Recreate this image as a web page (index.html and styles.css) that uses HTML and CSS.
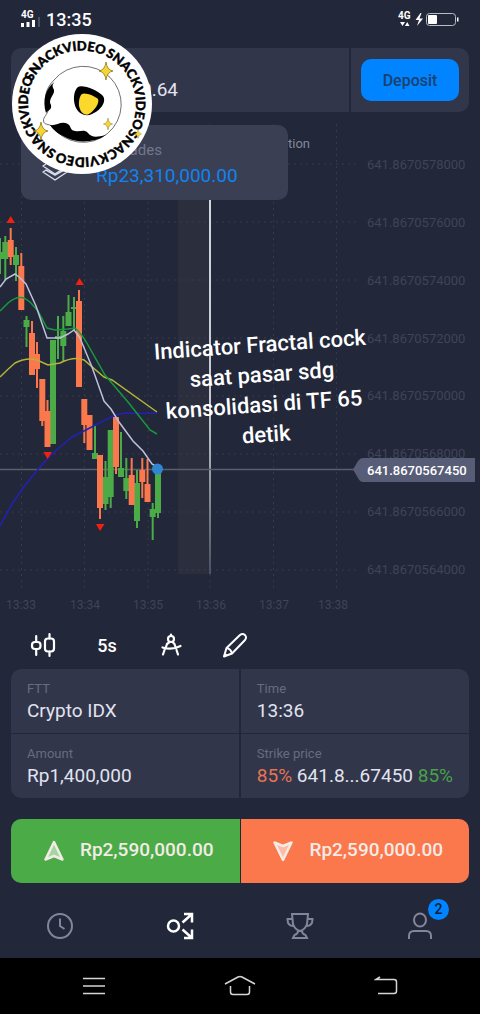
FILE: index.html
```
<!DOCTYPE html>
<html lang="id">
<head>
  <meta charset="UTF-8" />
  <meta name="viewport" content="width=device-width, initial-scale=1" />
  <title>Crypto IDX</title>
  <link rel="stylesheet" href="styles.css">
</head>
<body>
  <!-- STATUS BAR -->
  <header class="status">
    <svg width="20" height="18" viewBox="0 0 20 18" fill="#fff">
      <text class="net" x="0" y="8">4G</text>
      <path d="M0 13h3v4H0zM5.500 12h3v5h-3zM11 10h3v7h-3z"/>
      <path d="M17 7h2v10h-2z" fill="#4a4f60"/>
    </svg>
    <span class="clock">13:35</span>
    <svg class="battery" width="62" height="18" viewBox="0 0 62 18" fill="#fff">
      <text class="net" x="0" y="9">4G</text>
      <path d="M2 12h5l-2.500 4zM7 16l2.200-4 2.300 4z"/>
      <path d="M22.500 3l-5 7h3.500l-2 6 6-7.500h-3.500l2-5.500z"/>
      <rect x="28.500" y="3.500" width="29" height="12" rx="3" fill="none" stroke="#b9bcc6"/>
      <rect x="30" y="5" width="9" height="9" rx="1"/>
      <path d="M59 7.500h1.500v4H59z"/>
    </svg>
  </header>

  <!-- BALANCE -->
  <section class="account">
    <div class="balance">0.64</div>
    <div class="deposit-box"><button class="deposit">Deposit</button></div>
  </section>

  <!-- CHART -->
  <main class="chart">
    <svg class="plot" viewBox="0 112 480 510">
      <defs>
        <linearGradient id="fade" x1="0" y1="0" x2="0" y2="1">
          <stop offset="0" stop-color="#d4d6e0"/>
          <stop offset="0.600" stop-color="#c4c6d0"/>
          <stop offset="1" stop-color="#4c5060"/>
        </linearGradient>
      </defs>
      <rect x="178" y="200" width="32" height="374" fill="#2a2e3d"/>
      <path class="grid" d="M0 164H360M0 222H360M0 280H360M0 338H360M0 396H360M0 454H360M0 512H360M0 570H360"/>
      <path class="grid" d="M21.500 124V592M84.500 124V592M148 124V592M210 124V592M273.500 124V592M336.500 124V592"/>

      <g class="axis">
        <text x="367" y="169">641.8670578000</text>
        <text x="367" y="227">641.8670576000</text>
        <text x="367" y="285">641.8670574000</text>
        <text x="367" y="343">641.8670572000</text>
        <text x="367" y="400">641.8670570000</text>
        <text x="367" y="458">641.8670568000</text>
        <text x="367" y="516">641.8670566000</text>
        <text x="367" y="574">641.8670564000</text>
      </g>
      <g class="axis times">
        <text x="21" y="609">13:33</text>
        <text x="85" y="609">13:34</text>
        <text x="148" y="609">13:35</text>
        <text x="211" y="609">13:36</text>
        <text x="274" y="609">13:37</text>
        <text x="333" y="609">13:38</text>
      </g>
      <text class="expiry" x="310" y="148">Expiration</text>
      <rect x="209" y="190" width="2" height="384" fill="url(#fade)"/>
      <path d="M0 469.500H356" stroke="#5b5f6d" stroke-width="1.500"/>

      <!-- candles: thin wicks, then thick bodies -->
      <path class="wick up" d="M0 238V274M5.300 236V280M16 247V281M26.500 316V347M58 316V359M63.300 316V362M68.500 295V326M74 297V330M95 426V455M105.500 461V510M110.700 430V508M121 432V477M126.300 458V499M137 470V528M152.700 503V540M158 470V518"/>
      <path class="wick down" d="M10.700 228V265M21.300 253V270M32 321V340M37 342V388M42.300 379V426M47.500 400V447M79 290V320M84.300 399V443M100 455V519M116 417V474M131.700 458V500M142.300 458V498M147.500 459V500"/>
      <path class="body up" d="M0 252V259M5.300 242V259M16 255V265M26.500 320V327M53 340V444M58 336V339M63.300 331V346M68.500 312V326M74 307V309M95 453V459M105.500 477V504M110.700 430V497M121 468V477M126.300 478V491M137 483V521M152.700 509V517M158 470V513"/>
      <path class="body down" d="M10.700 240V257M21.300 266V310M32 333V375M37 354V369M42.300 379V421M47.500 411V447M79 301V387M84.300 399V425M89.500 415V450M100 455V508M116 417V467M131.700 475V505M142.300 470V482M147.500 484V502"/>

      <!-- moving averages -->
      <path class="ma" stroke="#2321b5" d="M0 526L12 504L23 488L35 473L48 458L60 447L72 437L84 431L105 420L116 415L125 413L140 413.500L157 413"/>
      <path class="ma" stroke="#b5b436" d="M0 377Q8 369 15 363Q27 357 37 360L48 365L60 363Q74 356 84 360L104 377L112 380L157 412"/>
      <path class="ma" stroke="#189a3a" d="M0 311L8 303Q16 296 24 298L30 302L38 311L47 328L55 330L68 329L75 328Q82 334 88 345L105 375L128 402L150 430L157 434"/>
      <path class="ma" stroke="#bfc0dc" d="M0 287L6 279L15 274L19 277L26 284L36 306L47 338L60 338L68 334L74 330L80 338L92 367L98 384L104 401L111 409L119 422L133 441L143 451L152 464L157 467"/>
      <path fill="#f2200f" d="M10.700 216L15 223H6.500zM79.500 278L84 285H75.500zM47.500 459L52 452H43.500zM100 531L104.500 524H96z"/>
      <circle cx="157.500" cy="469" r="5.500" fill="#2f87d2"/>

      <path d="M353 469.500L358 461Q360 458 363 458H475V482H363Q360 482 358 478z" fill="#575d77"/>
      <text class="current" x="367" y="475">641.8670567450</text>
    </svg>

    <div class="toast">
      <svg width="28" height="28" viewBox="0 0 28 28" fill="none" stroke="#d9dcec" stroke-width="1.500" stroke-linejoin="round">
        <path d="M5 8L2 10L14 18L26 10L23 8"/>
        <path d="M5 14L2 16L14 24L26 16L23 14L14 19z"/>
      </svg>
      <div>
        <div class="toast-label">My trades</div>
        <div class="toast-sum">Rp23,310,000.00</div>
      </div>
    </div>

    <p class="caption">Indicator Fractal cock<br>saat pasar sdg<br>konsolidasi di TF 65<br>detik</p>

    <svg class="logo" width="140" height="140" viewBox="0 0 140 140">
      <defs>
        <path id="ring" d="M21.900 44.400A54.500 54.500 0 0 1 118.100 95.600A54.500 54.500 0 0 1 21.900 44.400A54.500 54.500 0 0 1 118.100 95.600"/>
        <path id="star" d="M0-9Q1-1 7 0Q1 1 0 9Q-1 1-7 0Q-1-1 0-9z"/>
      </defs>
      <circle cx="70" cy="70" r="70" fill="#fff"/>
      <g class="ring-text">
        <text><textPath href="#ring" startOffset="0">SNACKVIDEO</textPath></text>
        <text><textPath href="#ring" startOffset="86">SNACKVIDEO</textPath></text>
        <text><textPath href="#ring" startOffset="171">SNACKVIDEO</textPath></text>
        <text><textPath href="#ring" startOffset="257">SNACKVIDEO</textPath></text>
      </g>
      <path d="M42 46A38 38 0 1 1 40 92C37 90 32 91 31.500 87C31 83 36 80 36 76C31 66 33 55 42 46z" fill="#fff" stroke="#333" stroke-width="0.700"/>
      <path d="M42.500 48C34 54 30 66 34 79C36 76 40 76 39 71C36 66 41 62 42 58C43 54 38 53 42.500 48z"/>
      <path d="M38 91C44 92 49 87 55 89.500C60 92 57 96 63 97C69 98 72 95 76 99C80 104 85 103 94 101C82 109 66 109 55 104C48 101 42 97 38 91z"/>
      <path d="M66 53C70 50 86 56 91 62C95 68 88 77 80 80C74 83 67 80 64 74C61 68 61 57 66 53z"/>
      <path d="M70 60C73 58 83 62 86 65C88 69 82 77 77 80C74 82 69 79 68 75C66 71 67 62 70 60z" fill="#fcd82c"/>
      <g fill="#f7d433" stroke="#8c771b" stroke-width="0.800">
        <use href="#star" x="94" y="37"/>
        <use href="#star" x="29" y="97"/>
        <use href="#star" transform="translate(96 90) scale(0.650)"/>
        <use href="#star" transform="translate(126 100) scale(0.500)"/>
      </g>
    </svg>
  </main>

  <!-- CHART TOOLS -->
  <div class="tools">
    <button aria-label="Chart type">
      <svg width="26" height="26" viewBox="0 0 26 26" fill="none" stroke="#fff" stroke-width="2.200" stroke-linecap="round">
        <rect x="2" y="10" width="8.500" height="7" rx="3"/>
        <rect x="15" y="6.500" width="9" height="13" rx="3"/>
        <path d="M6.200 4V10M6.200 17V23M19.500 2V6.500M19.500 19.500V24"/>
      </svg>
    </button>
    <button>5s</button>
    <button aria-label="Indicators">
      <svg width="26" height="26" viewBox="0 0 26 26" fill="none" stroke="#fff" stroke-width="2.200" stroke-linecap="round">
        <circle cx="13" cy="7" r="3"/>
        <path d="M13 2.500V4M9 12L8 15M6.500 18L5 22.500M16.500 12L17.500 15M18.500 18L20 22.500M4.500 15.500Q14 18.500 22.500 14M11 10.500L9 12M15 10.500L16.500 12"/>
      </svg>
    </button>
    <button aria-label="Draw">
      <svg width="26" height="26" viewBox="0 0 26 26" fill="none" stroke="#fff" stroke-width="2" stroke-linejoin="round">
        <path d="M2 24.500L4.500 16L18 3Q20.500 1 23 3Q25 5.500 23 8L10 21.500z"/>
        <path d="M4.500 16Q9 17 10 21.500M2 24.500L4.500 22"/>
      </svg>
    </button>
  </div>

  <!-- DEAL SETTINGS -->
  <section class="deal">
    <div class="cell"><span>FTT</span><b>Crypto IDX</b></div>
    <div class="cell"><span>Time</span><b>13:36</b></div>
    <div class="cell"><span>Amount</span><b>Rp1,400,000</b></div>
    <div class="cell"><span>Strike price</span><b><i class="red">85%</i> 641.8...67450 <i class="green">85%</i></b></div>
  </section>

  <div class="actions">
    <button class="buy">
      <svg width="22" height="22" viewBox="0 0 22 22"><path d="M11 2L19.500 19.500L11 16L2.500 19.500z"/></svg>
      Rp2,590,000.00
    </button>
    <button class="sell">
      <svg width="22" height="22" viewBox="0 0 22 22"><path d="M11 20L2.500 2.500L11 6L19.500 2.500z"/></svg>
      Rp2,590,000.00
    </button>
  </div>

  <!-- BOTTOM MENU -->
  <nav class="menu">
    <a href="#" aria-label="History">
      <svg width="30" height="30" viewBox="0 0 30 30"><circle cx="15" cy="15" r="12"/><path d="M15 7.500V15L19.500 18"/></svg>
    </a>
    <a href="#" class="active" aria-label="Trade">
      <svg width="30" height="30" viewBox="0 0 30 30"><circle cx="8.500" cy="15" r="5.500"/><path d="M17.500 11.500L27 3M19 3H27V11.500M17.500 18.500L27 27M19 27H27V18.500"/></svg>
    </a>
    <a href="#" aria-label="Tournaments">
      <svg width="30" height="30" viewBox="0 0 30 30"><path d="M7 3H23L22 13Q20 19 15 20Q10 19 8 13zM7.500 8H2.500Q2.500 15 8.500 15M22.500 8H27.500Q27.500 15 21.500 15M13 20Q13 23 9.500 24L8 27H22L20.500 24Q17 23 17 20"/></svg>
    </a>
    <a href="#" aria-label="Profile">
      <svg width="30" height="30" viewBox="0 0 30 30"><ellipse cx="15" cy="9" rx="6" ry="6.500"/><path d="M4 28V25Q4 20 9 20H21Q26 20 26 25V28"/></svg>
      <span class="badge">2</span>
    </a>
  </nav>

  <footer class="android">
    <svg width="24" height="24" viewBox="0 0 24 24"><path d="M1 4.500H23M1 12H23M1 19.500H23"/></svg>
    <svg width="32" height="24" viewBox="0 0 32 24"><path d="M1 10L14 3Q16 2 18 3L31 10M6.500 12V18Q6.500 20.500 9 20.500H23Q25.500 20.500 25.500 18V12"/></svg>
    <svg width="24" height="24" viewBox="0 0 24 24"><path d="M6 3L2 5.500H20Q22.500 5.500 22.500 8V17Q22.500 19.500 20 19.500H4"/></svg>
  </footer>
</body>
</html>
```

FILE: styles.css
```
* {
  box-sizing: border-box;
}
body {
  margin: 0;
  min-height: 100vh;
  display: flex;
  flex-direction: column;
  font-family: Roboto, Arial, sans-serif;
  color: #e1e3f0;
  background: #22273a;
}
button {
  font-family: inherit;
  border: none;
  padding: 0;
  cursor: pointer;
}

/* status bar */
.status {
  display: flex;
  align-items: center;
  height: 48px;
  padding: 0 20px 10px 21px;
}
.net {
  font-size: 10px;
  font-weight: bold;
}
.clock {
  margin-left: 5px;
  font-size: 18px;
  font-weight: 500;
  color: #fff;
}
.battery {
  margin-left: auto;
}

/* balance */
.account {
  display: flex;
  gap: 2px;
  height: 64px;
  margin: 0 11px;
}
.balance {
  flex: 1;
  padding: 31px 0 0 130px;
  font-size: 19px;
  line-height: 22px;
  background: #31364a;
  border-radius: 10px 0 0 10px;
}
.deposit-box {
  padding: 11px 10px;
  background: #31364a;
  border-radius: 0 10px 10px 0;
}
.deposit {
  width: 98px;
  height: 42px;
  font-size: 16px;
  font-weight: 500;
  color: #1b4170;
  background: #0084ff;
  border-radius: 10px;
}

/* chart */
.chart {
  position: relative;
}
.plot {
  display: block;
  width: 100%;
}
.grid {
  stroke: #363b4b;
  stroke-dasharray: 2 4;
}
.axis {
  font-size: 13px;
  fill: #404457;
}
.times {
  font-size: 12px;
  text-anchor: middle;
}
.expiry {
  font-size: 13px;
  text-anchor: end;
  fill: #85899a;
}
.current {
  font-size: 13px;
  font-weight: 500;
  fill: #fff;
}
.up {
  stroke: #4bab47;
}
.down {
  stroke: #fb774c;
}
.wick {
  stroke-width: 2;
}
.body {
  stroke-width: 6;
}
.ma {
  fill: none;
  stroke-width: 1.5;
}
.toast {
  position: absolute;
  top: 13px;
  left: 21px;
  display: flex;
  gap: 27px;
  width: 267px;
  height: 75px;
  padding: 16px 20px;
  background: #3b3f54;
  border-radius: 10px;
}
.toast svg {
  margin-top: 15px;
}
.toast-label {
  font-size: 15px;
  line-height: 18px;
  color: #73778a;
}
.toast-sum {
  margin-top: 6px;
  font-size: 19px;
  line-height: 22px;
  color: #1283ee;
}
.caption {
  position: absolute;
  top: 218px;
  left: 143px;
  width: 240px;
  margin: 0;
  font-size: 22px;
  font-weight: 500;
  line-height: 30px;
  text-align: center;
  color: #fff;
  transform: rotate(-4deg);
}
.logo {
  position: absolute;
  top: -78px;
  left: 12px;
}
.ring-text {
  font-family: Lato, sans-serif;
  font-size: 13px;
  font-weight: 900;
  stroke: #000;
  stroke-width: 0.4px;
  transform: rotate(-4deg);
  transform-origin: 70px 70px;
}

/* chart tools */
.tools {
  display: flex;
  gap: 38px;
  padding: 10px 30px 11px;
}
.tools button {
  width: 26px;
  height: 26px;
  font-size: 18px;
  font-weight: 500;
  color: #fff;
  background: none;
}

/* deal settings */
.deal {
  display: grid;
  grid-template-columns: 1fr 1fr;
  gap: 1px 2px;
  margin: 0 11px;
  border-radius: 10px;
  overflow: hidden;
}
.cell {
  height: 64px;
  padding: 11px 16px;
  background: #31364a;
}
.cell span {
  display: block;
  font-size: 13px;
  line-height: 17px;
  color: #686c80;
}
.cell b {
  display: block;
  margin-top: 3px;
  font-size: 19px;
  font-weight: 400;
  line-height: 22px;
  white-space: nowrap;
}
.cell i {
  font-style: normal;
}
.red {
  color: #e87353;
}
.green {
  color: #48a248;
}

/* buy / sell */
.actions {
  display: grid;
  grid-template-columns: 1fr 1fr;
  gap: 1px;
  margin: 21px 11px 0;
}
.actions button {
  display: flex;
  align-items: center;
  justify-content: center;
  gap: 15px;
  height: 64px;
  padding: 0 0 4px 6px;
  font-size: 19px;
  font-weight: 500;
  color: #f3ebe6;
}
.actions svg {
  margin-top: 3px;
}
.actions path {
  fill: #ffffff80;
  stroke: #f3ebe6;
  stroke-width: 2.5;
  stroke-linejoin: round;
}
.buy {
  background: #4bab47;
  border-radius: 10px 0 0 10px;
}
.sell {
  background: #fb774c;
  border-radius: 0 10px 10px 0;
}

/* bottom menu */
.menu {
  display: grid;
  grid-template-columns: repeat(4, 1fr);
  height: 75px;
  padding-top: 28px;
}
.menu a {
  position: relative;
  display: flex;
  justify-content: center;
}
.menu svg {
  fill: none;
  stroke: #82869b;
  stroke-width: 2;
}
.menu .active svg {
  stroke: #fff;
  stroke-width: 2.5;
}
.badge {
  position: absolute;
  top: -12px;
  left: 68px;
  width: 21px;
  height: 21px;
  font-size: 14px;
  font-weight: 500;
  line-height: 21px;
  text-align: center;
  color: #0d2137;
  background: #0084ff;
  border-radius: 50%;
}

.android {
  flex: 1;
  display: flex;
  align-items: center;
  justify-content: space-between;
  min-height: 56px;
  padding: 0 82px;
  background: #000;
}
.android svg {
  fill: none;
  stroke: #d5d5d5;
  stroke-width: 1.5;
}
```
